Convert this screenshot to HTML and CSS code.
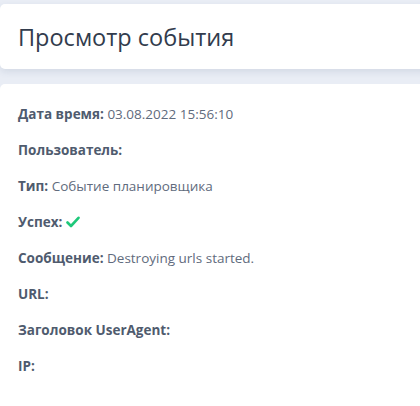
FILE: index.html
```html
<!DOCTYPE html>
<html lang="ru">
<head>
<meta charset="utf-8">
<title>Просмотр события</title>
<link rel="stylesheet" href="styles.css">
</head>
<body>
<div class="page">
  <header class="card header">
    <h1 class="title">Просмотр события</h1>
  </header>
  <section class="card details">
    <div class="row"><span class="label">Дата время:</span> <span class="value">03.08.2022 15:56:10</span></div>
    <div class="row"><span class="label">Пользователь:</span></div>
    <div class="row"><span class="label">Тип:</span> <span class="value">Событие планировщика</span></div>
    <div class="row"><span class="label">Успех:</span> <svg class="check" width="14" height="12" viewBox="0 0 14 12"><path d="M1.5 6.5 L5 10 L12.5 1.8" fill="none" stroke="#1ec87a" stroke-width="2.6" stroke-linecap="round" stroke-linejoin="round"/></svg></div>
    <div class="row"><span class="label">Сообщение:</span> <span class="value">Destroying urls started.</span></div>
    <div class="row"><span class="label">URL:</span></div>
    <div class="row"><span class="label">Заголовок UserAgent:</span></div>
    <div class="row"><span class="label">IP:</span></div>
  </section>
</div>
</body>
</html>
```
FILE: styles.css
```css
html, body {
  margin: 0;
  padding: 0;
  background: #e9edf5;
  font-family: "Open Sans", "Noto Sans", sans-serif;
}
.page {
  height: 406px;
  overflow: hidden;
  padding-top: 4px;
  box-sizing: border-box;
  display: flex;
  flex-direction: column;
  gap: 15px;
}
.card {
  background: #ffffff;
  margin-right: -10px;
}
.header {
  flex: none;
  height: 65px;
  display: flex;
  align-items: center;
  padding-left: 18px;
  border-radius: 5px 0 0 5px;
  box-shadow: 0 3px 7px rgba(60, 80, 120, 0.12);
}
.title {
  margin: 0;
  font-size: 23.5px;
  font-weight: 400;
  color: #323c4d;
}
.details {
  flex: 1;
  padding: 16px 18px 0;
  border-radius: 5px 0 0 0;
}
.row {
  height: 36px;
  line-height: 18px;
  padding-top: 5px;
  box-sizing: border-box;
  font-size: 13.5px;
}
.label {
  font-weight: 700;
  color: #4f5b6e;
}
.value {
  color: #5f6b7d;
}
.check {
  vertical-align: -1px;
  margin-left: 0;
}
```
